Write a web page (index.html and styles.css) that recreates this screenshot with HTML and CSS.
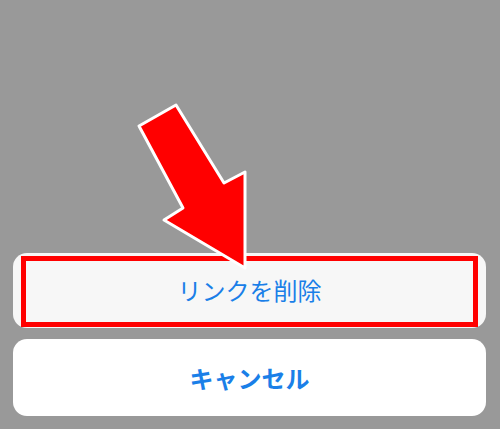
FILE: index.html
```
<!DOCTYPE html>
<html lang="ja">
<head>
<meta charset="utf-8">
<link rel="stylesheet" href="styles.css">
</head>
<body>
<div class="screen">
  <div class="sheet sheet-action">
    <span class="label">リンクを削除</span>
    <div class="highlight"></div>
  </div>
  <div class="sheet sheet-cancel">
    <span class="label bold">キャンセル</span>
  </div>
  <svg class="arrow" width="500" height="429" viewBox="0 0 500 429">
    <polygon points="139,126 176,105 224,183 245,172 245,268 164,220 183,208" fill="#ff0000" stroke="#ffffff" stroke-width="3" stroke-linejoin="round"/>
  </svg>
</div>
</body>
</html>
```
FILE: styles.css
```
html, body {
  margin: 0;
  padding: 0;
}
body {
  background: #999999;
  font-family: "Noto Sans CJK JP", "Noto Sans", sans-serif;
}
.screen {
  position: relative;
  width: 500px;
  height: 429px;
  display: flex;
  flex-direction: column;
  justify-content: flex-end;
  gap: 11px;
  padding: 0 14px 13px 13px;
  box-sizing: border-box;
}
.sheet {
  position: relative;
  border-radius: 14px;
  display: flex;
  align-items: center;
  justify-content: center;
}
.sheet-action {
  height: 75px;
  background: #f7f7f7;
}
.sheet-cancel {
  height: 77px;
  background: #ffffff;
}
.label {
  font-size: 24px;
  line-height: 1;
  color: #1a7fe8;
}
.sheet-action .label {
  margin-top: -1px;
}
.bold {
  font-weight: 700;
}
.highlight {
  position: absolute;
  top: 3px;
  left: 8px;
  right: 8px;
  bottom: 1px;
  border: 5px solid #ff0000;
}
.arrow {
  position: absolute;
  left: 0;
  top: 0;
}
```
